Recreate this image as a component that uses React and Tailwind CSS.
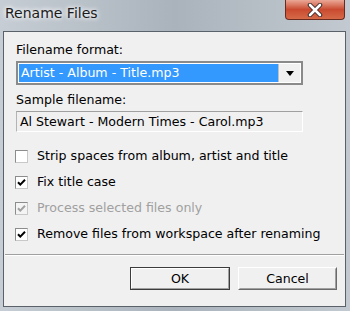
import React from 'react';

const font = { fontFamily: '"DejaVu Sans", Verdana, sans-serif' };

function CheckBox({ checked, disabled }) {
  return (
    <span
      className={`relative w-[13px] h-[13px] shrink-0 border border-t-[#8c8c8c] border-l-[#8c8c8c] border-b-[#c8c8c8] border-r-[#c8c8c8] ${
        disabled ? 'bg-[#f4f4f4]' : 'bg-white'
      }`}
    >
      {checked && (
        <svg viewBox="0 0 11 11" className="absolute inset-0 w-[11px] h-[11px]">
          <path
            d="M2 5.2 L4.3 7.6 L9 2.8"
            fill="none"
            stroke={disabled ? '#a0a0a0' : '#000'}
            strokeWidth="2"
          />
        </svg>
      )}
    </span>
  );
}

function Option({ label, checked, disabled }) {
  return (
    <div className="flex items-center h-[26px] pl-[11px] gap-[9px]">
      <CheckBox checked={checked} disabled={disabled} />
      <span className={`text-[12.6px] leading-4 ${disabled ? 'text-[#a0a0a0]' : 'text-black'}`}>{label}</span>
    </div>
  );
}

export default function App() {
  return (
    <div className="w-[350px] h-[311px] overflow-hidden flex flex-col bg-gradient-to-r from-[#c6cdd4] via-[#aab3bc] to-[#c2c9d0]" style={font}>
      <div className="h-[31px] shrink-0 flex items-start justify-between">
        <span className="pl-[5px] pt-[5px] text-[14px] leading-4 text-[#1b1b1b]" style={{ textShadow: '0 0 6px #fff, 0 0 4px #fff' }}>
          Rename Files
        </span>
        <div className="mr-[5px] w-[60px] h-[20px] rounded-b-[4px] border border-t-0 border-[#6b2a1e] bg-gradient-to-b from-[#e9a796] via-[#c94a30] to-[#d66a48] flex items-center justify-center">
          <svg viewBox="0 0 16 14" className="w-[16px] h-[14px]">
            <path d="M3 2 L13 12 M13 2 L3 12" stroke="#3a2a28" strokeWidth="4.5" strokeLinecap="round" />
            <path d="M3 2 L13 12 M13 2 L3 12" stroke="#fff" strokeWidth="2.6" strokeLinecap="round" />
          </svg>
        </div>
      </div>

      <div className="ml-[3px] w-[343px] h-[276px] shrink-0 border border-[#5b6168] bg-[#f0f0f0] flex flex-col pt-[10px]">
        <div className="pl-[12px] text-[12.6px] leading-4 text-black">Filename format:</div>
        <div className="mt-[3px] ml-[12px] w-[287px] h-[24px] border-2 border-[#8a8a8a] bg-white flex p-[1px]">
          <div className="flex-1 bg-[#3399ff] text-white text-[12.6px] leading-4 flex items-center pl-[2px]">
            Artist - Album - Title.mp3
          </div>
          <div className="w-[22px] bg-[#f0f0f0] border-l border-[#c0c0c0] flex items-center justify-center">
            <svg viewBox="0 0 8 5" className="w-[8px] h-[5px]">
              <path d="M0 0 H8 L4 5 Z" fill="#000" />
            </svg>
          </div>
        </div>

        <div className="mt-[7px] pl-[12px] text-[12.6px] leading-4 text-black">Sample filename:</div>
        <div className="mt-[3px] ml-[12px] w-[287px] h-[21px] border border-t-[#a0a0a0] border-l-[#b4b4b4] border-b-white border-r-white bg-[#f0f0f0] flex items-center pl-[3px] text-[12.6px] leading-4 text-black">
          Al Stewart - Modern Times - Carol.mp3
        </div>

        <div className="mt-[11px] flex flex-col">
          <Option label="Strip spaces from album, artist and title" />
          <Option label="Fix title case" checked />
          <Option label="Process selected files only" checked disabled />
          <Option label="Remove files from workspace after renaming" checked />
        </div>

        <div className="mt-[7px] mx-[1px] h-[2px] border-t border-b border-t-[#a0a0a0] border-b-white" />

        <div className="mt-[11px] flex justify-end gap-[8px] pr-[8px]">
          <button className="w-[100px] h-[23px] border border-[#3c3c3c] bg-[#f0f0f0] text-[12.6px] leading-4 text-black" style={font}>
            <span className="block h-full border border-t-white border-l-white border-b-[#a0a0a0] border-r-[#a0a0a0] leading-[19px]">OK</span>
          </button>
          <button className="w-[99px] h-[23px] border border-t-white border-l-white border-b-[#6a6a6a] border-r-[#6a6a6a] bg-[#f0f0f0] text-[12.6px] leading-4 text-black" style={font}>
            <span className="block h-full border border-t-[#f0f0f0] border-l-[#f0f0f0] border-b-[#a0a0a0] border-r-[#a0a0a0] leading-[19px]">Cancel</span>
          </button>
        </div>
      </div>
    </div>
  );
}
